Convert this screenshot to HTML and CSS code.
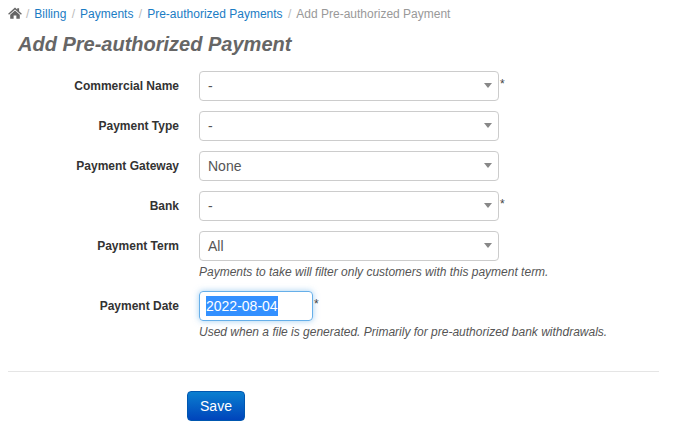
FILE: index.html
```html
<!DOCTYPE html>
<html lang="en">
<head>
<meta charset="utf-8">
<title>Add Pre-authorized Payment</title>
<link rel="stylesheet" href="styles.css">
</head>
<body>
<nav class="crumbs">
  <svg class="home" viewBox="0 0 16 14" width="14" height="12" aria-hidden="true"><path d="M8 0.6 L10.6 3 V1.4 H12.8 V5 L16 8 L15 9 L8 2.8 L1 9 L0 8 Z M8 4 L13.6 9 V13.6 H9.6 V9.8 H6.4 V13.6 H2.4 V9 Z"/></svg>
  <span class="sep">/</span><a href="#">Billing</a>
  <span class="sep">/</span><a href="#">Payments</a>
  <span class="sep">/</span><a href="#">Pre-authorized Payments</a>
  <span class="sep">/</span><span class="current">Add Pre-authorized Payment</span>
</nav>
<h1>Add Pre-authorized Payment</h1>
<form class="form">
  <div class="row">
    <label>Commercial Name</label>
    <div class="field"><div class="line"><div class="select">-</div><span class="req">*</span></div></div>
  </div>
  <div class="row">
    <label>Payment Type</label>
    <div class="field"><div class="line"><div class="select">-</div></div></div>
  </div>
  <div class="row">
    <label>Payment Gateway</label>
    <div class="field"><div class="line"><div class="select">None</div></div></div>
  </div>
  <div class="row">
    <label>Bank</label>
    <div class="field"><div class="line"><div class="select">-</div><span class="req">*</span></div></div>
  </div>
  <div class="row row-help">
    <label>Payment Term</label>
    <div class="field"><div class="line"><div class="select">All</div></div><p class="help">Payments to take will filter only customers with this payment term.</p></div>
  </div>
  <div class="row">
    <label>Payment Date</label>
    <div class="field"><div class="line"><div class="date"><span class="selected">2022-08-04</span></div><span class="req">*</span></div><p class="help">Used when a file is generated. Primarily for pre-authorized bank withdrawals.</p></div>
  </div>
  <div class="actions"><button type="button" class="save">Save</button></div>
</form>
</body>
</html>
```
FILE: styles.css
```css
* { box-sizing: border-box; }
html, body { margin: 0; padding: 0; }
body {
  width: 684px;
  height: 434px;
  overflow: hidden;
  background: #fff;
  font-family: "Liberation Sans", Arial, sans-serif;
  font-size: 12px;
  color: #333;
}
.crumbs {
  display: flex;
  align-items: center;
  height: 18px;
  margin: 5px 0 0 8px;
  line-height: 18px;
}
.home { fill: #666; margin-right: 3px; margin-top: -2px; }
.sep { color: #bbb; margin: 0 5px 0 1px; }
.crumbs a { color: #1a7cc4; text-decoration: none; margin-right: 4.4px; }
.current { color: #999; }
h1 {
  margin: 9px 0 0 18px;
  font-size: 20px;
  line-height: 24px;
  font-weight: bold;
  font-style: italic;
  color: #666;
}
.form { margin-top: 15px; }
.row { display: flex; margin-bottom: 10px; }
.row-help { margin-bottom: 12px; }
.row label {
  width: 179px;
  padding-top: 8px;
  text-align: right;
  font-weight: bold;
  line-height: 14px;
  color: #333;
}
.field { margin-left: 20px; }
.line { display: flex; align-items: flex-start; }
.select {
  position: relative;
  width: 300px;
  height: 30px;
  padding-left: 8px;
  border: 1px solid #ccc;
  border-radius: 4px;
  background: #fff;
  font-size: 14px;
  line-height: 28px;
  color: #555;
}
.select::after {
  content: "";
  position: absolute;
  right: 6px;
  top: 11px;
  border-left: 4px solid transparent;
  border-right: 4px solid transparent;
  border-top: 5px solid #888;
}
.req { margin: 4px 0 0 1px; font-size: 12px; line-height: 18px; color: #444; }
.date {
  width: 114px;
  height: 30px;
  padding: 4px 6px;
  border: 1px solid #66afe9;
  border-radius: 4px;
  box-shadow: 0 0 6px rgba(102, 175, 233, 0.6);
  font-size: 14px;
  line-height: 20px;
}
.selected { display: inline-block; height: 20px; background: #3390ff; color: #fff; }
.help {
  margin: 4px 0 0;
  font-size: 12px;
  line-height: 14px;
  font-style: italic;
  color: #555;
}
.actions {
  width: 651px;
  margin: 32px 0 0 8px;
  padding: 19px 0 0 179px;
  border-top: 1px solid #e5e5e5;
}
.save {
  width: 58px;
  height: 30px;
  padding: 0;
  border: 1px solid #0057b0;
  border-radius: 4px;
  background: linear-gradient(#0a7fd0, #0044bb);
  color: #fff;
  font-family: inherit;
  font-size: 14px;
}
```
